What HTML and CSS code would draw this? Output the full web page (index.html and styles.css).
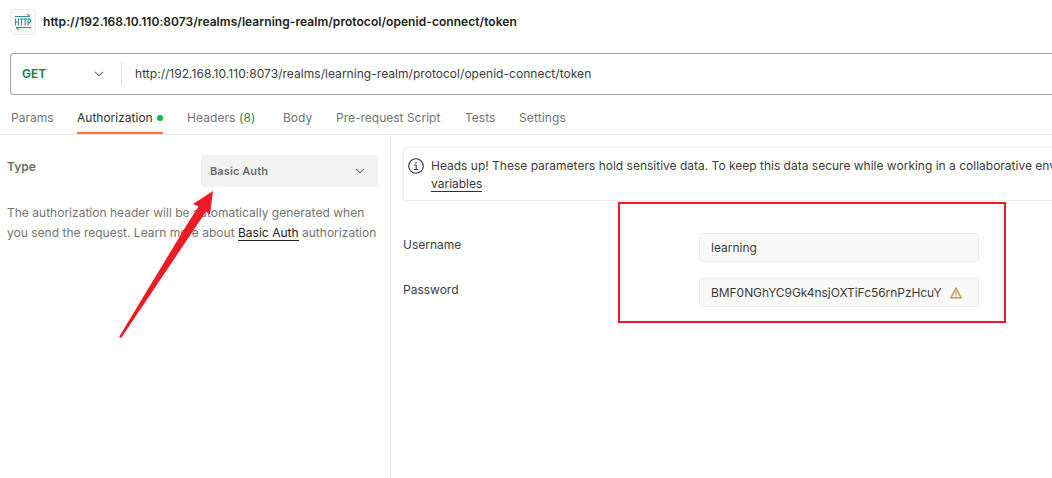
FILE: index.html
```html
<!DOCTYPE html>
<html lang="en">
<head>
<meta charset="utf-8">
<title>Request authorization</title>
<link rel="stylesheet" href="styles.css">
</head>
<body>
<div class="app">
  <header class="title-bar">
    <span class="http-badge">
      <svg width="18" height="18" viewBox="0 0 18 18" fill="none" stroke="#2f8f9d" stroke-width="1.1">
        <path d="M1 3.5H16M13.3 1.2 16 3.5M17 14.5H2M4.7 16.8 2 14.5"/>
        <path d="M1.5 5.5V12.5M4.5 5.5V12.5M1.5 9H4.5M5.5 6H9.5M7.5 6V12.5M9.5 6H13M11.2 6V12.5M14 12.5V6H15.4Q16.8 6 16.8 7.8T15.4 9.6H14"/>
      </svg>
    </span>
    <h1 class="title">http://192.168.10.110:8073/realms/learning-realm/protocol/openid-connect/token</h1>
  </header>

  <div class="url-bar">
    <div class="method">
      <span>GET</span>
      <svg class="chevron" width="10" height="6" viewBox="0 0 10 6"><path d="M1 .8 5 4.8 9 .8"/></svg>
    </div>
    <div class="url">http://192.168.10.110:8073/realms/learning-realm/protocol/openid-connect/token</div>
  </div>

  <nav class="tabs">
    <span class="tab tab-params">Params</span>
    <span class="tab tab-auth">Authorization<i class="dot"></i></span>
    <span class="tab tab-headers">Headers <b class="count">(8)</b></span>
    <span class="tab tab-body">Body</span>
    <span class="tab tab-script">Pre-request Script</span>
    <span class="tab tab-tests">Tests</span>
    <span class="tab tab-settings">Settings</span>
  </nav>

  <main class="panes">
    <section class="side">
      <div class="type-row">
        <span class="type-label">Type</span>
        <div class="select">
          <span>Basic Auth</span>
          <svg class="chevron" width="10" height="6" viewBox="0 0 10 6"><path d="M1 .8 5 4.8 9 .8"/></svg>
        </div>
      </div>
      <p class="help">The authorization header will be automatically generated when<br>you send the request. Learn more about <a class="link">Basic Auth</a> authorization</p>
    </section>
    <section class="content">
      <div class="notice">
        <svg class="info" width="16" height="16" viewBox="0 0 16 16" fill="none" stroke="#333"><circle cx="8" cy="8" r="7.3" stroke-width="1.1"/><path d="M6.3 7H8.2V11.5M6 11.5H10.2" stroke-width="1"/><path d="M7.3 4.8H8.7" stroke-width="1.4"/></svg>
        <p class="notice-text">Heads up! These parameters hold sensitive data. To keep this data secure while working in a collaborative env<br><a class="link link-dim">variables</a></p>
      </div>
      <div class="field">
        <label>Username</label>
        <div class="input">learning</div>
      </div>
      <div class="field">
        <label>Password</label>
        <div class="input"><span class="secret">BMF0NGhYC9Gk4nsjOXTiFc56rnPzHcuY</span>
          <svg width="12" height="12" viewBox="0 0 12 12" fill="none" stroke="#c09a45" stroke-width="1.4" stroke-linejoin="round"><path d="M6 1.2 11.2 10.800H.8Z"/><path d="M6 4.300V7.300M6 8.300V9.600" stroke-width="1.200"/></svg>
        </div>
      </div>
    </section>
  </main>

  <div class="mark-box"></div>
  <svg class="mark-arrow" width="98" height="150" viewBox="0 0 98 150"><path d="M95 1 75 14 80.500 16.500 69 34.500 1.300 146.500Q1.500 148.500 3.500 147.500L79 35 88 21.500 92 24.500Z" fill="#ed1c24"/></svg>
</div>
</body>
</html>
```
FILE: styles.css
```css
* { box-sizing: border-box; }
body {
  margin: 0;
  background: #fff;
  color: #3b3b3b;
  font: 12px/18px Inter, "Liberation Sans", sans-serif;
}
.app {
  position: relative;
  width: 1052px;
  height: 478px;
  overflow: hidden;
  display: flex;
  flex-direction: column;
}
.title-bar {
  display: flex;
  align-items: center;
  gap: 7px;
  height: 44px;
  padding-left: 10px;
}
.http-badge {
  display: grid;
  place-items: center;
  width: 26px;
  height: 26px;
  border: 1px solid #ececec;
  border-radius: 4px;
  background: #f9f9f9;
}
.title { margin: 0; font-size: 12px; font-weight: 600; letter-spacing: .055px; color: #212121; white-space: nowrap; }
.url-bar {
  display: flex;
  align-items: center;
  height: 42px;
  margin: 9px 0 0 10px;
  border: 1px solid #a0a0a0;
  border-right: 0;
  border-radius: 4px 0 0 4px;
}
.method {
  display: flex;
  align-items: center;
  justify-content: space-between;
  width: 111px;
  height: 24px;
  padding: 0 17px 0 11px;
  border-right: 1px solid #e0e0e0;
  color: #0a7f44;
  font-weight: 600;
}
.chevron { fill: none; stroke: #666; stroke-width: 1.1; }
.url { padding-left: 13px; letter-spacing: .037px; white-space: nowrap; }
.tabs {
  display: flex;
  height: 40px;
  padding-left: 11px;
  border-bottom: 1px solid #e8e8e8;
  color: #737373;
}
.tab { display: flex; height: 39px; padding-top: 14px; white-space: pre; }
.tab-params { width: 42px; margin-right: 24px; }
.tab-auth {
  align-items: flex-start;
  justify-content: space-between;
  width: 86px;
  margin-right: 24px;
  border-bottom: 2px solid #ff6c37;
  color: #303030;
}
.dot { width: 6px; height: 6px; margin-top: 6px; border-radius: 50%; background: #0cbb52; }
.tab-headers { width: 68px; margin-right: 28px; letter-spacing: .08px; }
.count { font-weight: 400; color: #3d7a56; }
.tab-body { width: 29px; margin-right: 24px; }
.tab-script { width: 104px; margin-right: 25px; }
.tab-tests { width: 30px; margin-right: 24px; }
.tab-settings { letter-spacing: .12px; }
.panes { display: flex; flex: 1; }
.side { width: 391px; padding: 20px 12px 0 7px; border-right: 1px solid #e8e8e8; }
.type-row { display: flex; justify-content: space-between; color: #6b6b6b; font-weight: 600; }
.type-label { padding-top: 3px; }
.select {
  display: flex;
  align-items: center;
  justify-content: space-between;
  width: 177px;
  height: 32px;
  padding: 0 13px 0 9px;
  border-radius: 4px;
  background: #f2f2f2;
  font-size: 11px;
  letter-spacing: .1px;
}
.help { margin: 16px 0 0; line-height: 20px; letter-spacing: .014px; color: #737373; white-space: nowrap; }
.link { border-bottom: 1px solid currentColor; color: #212121; }
.link-dim { color: #333; }
.content { flex: 1; min-width: 0; padding: 12px 0 0 12px; }
.notice {
  display: flex;
  gap: 7px;
  height: 54px;
  margin-bottom: 32px;
  padding: 9px 0 0 4px;
  border: 1px solid #ececec;
  border-right: 0;
  border-radius: 4px 0 0 4px;
}
.info { flex: none; margin-top: 1px; }
.notice-text { margin: 0; white-space: nowrap; }
.field { display: flex; height: 29px; margin-bottom: 16px; }
.field label { width: 296px; padding-top: 3px; }
.input {
  display: flex;
  align-items: center;
  width: 280px;
  height: 29px;
  padding-left: 11px;
  border: 1px solid #ececec;
  border-radius: 4px;
  background: #f9f9f9;
}
.secret { width: 239px; letter-spacing: -.055px; }
.mark-box {
  position: absolute;
  left: 618px;
  top: 202px;
  width: 388px;
  height: 121px;
  border: 2px solid #ed1c24;
}
.mark-arrow { position: absolute; left: 118px; top: 190px; }
```
